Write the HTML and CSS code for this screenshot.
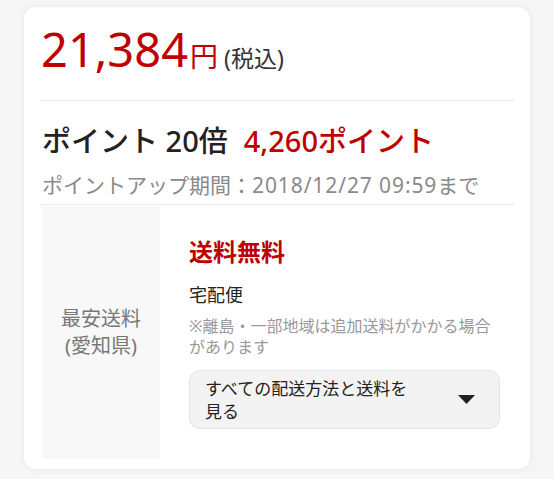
FILE: index.html
```html
<!DOCTYPE html>
<html lang="ja">
<head>
<meta charset="utf-8">
<title>価格</title>
<link rel="stylesheet" href="styles.css">
</head>
<body>
<div class="card">
  <div class="price-row">
    <span class="price">21,384</span><span class="yen">円</span><span class="tax">(税込)</span>
  </div>
  <div class="points">
    <div class="points-line">
      <span class="points-rate">ポイント 20倍</span><span class="points-value">4,260ポイント</span>
    </div>
    <div class="points-period">ポイントアップ期間：<span class="points-date">2018/12/27 09:59</span>まで</div>
  </div>
  <div class="shipping">
    <div class="shipping-label">最安送料<br>(愛知県)</div>
    <div class="shipping-body">
      <div class="shipping-free">送料無料</div>
      <div class="shipping-method">宅配便</div>
      <div class="shipping-note">※離島・一部地域は追加送料がかかる場合があります</div>
      <div class="shipping-button">
        <span class="shipping-button-text">すべての配送方法と送料を見る</span>
        <svg class="caret" width="17" height="9" viewBox="0 0 17 9"><path d="M0 0H17L8.5 9Z" fill="#222"/></svg>
      </div>
    </div>
  </div>
</div>
</body>
</html>
```

FILE: styles.css
```css
html, body {
  margin: 0;
  padding: 0;
}
body {
  background: #f6f6f6;
  font-family: "Noto Sans", "Noto Sans CJK JP", sans-serif;
  color: #222;
  padding: 7px 24px 10px 24px;
  width: 506px;
}
.card {
  background: #fff;
  border-radius: 12px;
  box-shadow: 0 0 6px rgba(0, 0, 0, 0.07);
  padding: 0 15px 12px 16px;
  height: 462px;
  box-sizing: border-box;
}
.price-row {
  padding-top: 19px;
  padding-bottom: 27px;
  border-bottom: 1px solid #ececec;
  line-height: 1;
  white-space: nowrap;
}
.price {
  font-size: 47px;
  color: #bf0000;
  margin-left: 1px;
}
.yen {
  font-size: 28px;
  color: #bf0000;
  margin-left: 2px;
}
.tax {
  font-size: 23px;
  color: #333;
  margin-left: 6px;
}
.points {
  padding-top: 22px;
  padding-bottom: 4px;
  border-bottom: 1px solid #ececec;
}
.points-line {
  font-size: 29px;
  line-height: 36px;
  font-weight: 500;
  white-space: nowrap;
}
.points-rate {
  color: #222;
  margin-left: 2px;
}
.points-value {
  color: #bf0000;
  margin-left: 16px;
}
.points-period {
  margin-top: 11px;
  font-size: 21px;
  line-height: 30px;
  color: #8a8a8a;
  margin-left: 2px;
  white-space: nowrap;
}
.points-date {
  letter-spacing: 0.9px;
}
.shipping {
  display: flex;
  margin-top: 1px;
  margin-left: 2px;
  height: 253px;
}
.shipping-label {
  width: 118px;
  flex: none;
  background: #f8f8f8;
  color: #777;
  font-size: 20px;
  line-height: 27px;
  display: flex;
  align-items: center;
  justify-content: center;
  text-align: center;
  padding-bottom: 2px;
  box-sizing: border-box;
}
.shipping-body {
  flex: 1;
  padding: 28px 15px 0 29px;
}
.shipping-free {
  color: #bf0000;
  font-weight: bold;
  font-size: 24px;
  line-height: 36px;
}
.shipping-method {
  margin-top: 12px;
  font-size: 18px;
  line-height: 26px;
  color: #222;
}
.shipping-note {
  margin-top: 8px;
  font-size: 16px;
  line-height: 21px;
  color: #999;
}
.shipping-button {
  margin-top: 12px;
  display: flex;
  align-items: center;
  background: #f3f3f3;
  border: 1px solid #e4e4e4;
  border-radius: 11px;
  padding: 6px 24px 6px 15px;
  height: 59px;
  box-sizing: border-box;
}
.shipping-button-text {
  flex: 1;
  font-size: 17px;
  line-height: 23px;
  color: #222;
}
.caret {
  flex: none;
  margin-left: 36px;
}
```
